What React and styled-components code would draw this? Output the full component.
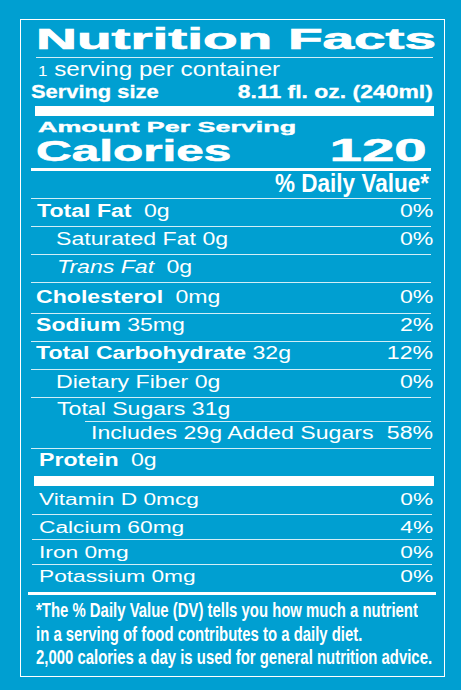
import React from 'react';
import styled, {createGlobalStyle} from 'styled-components';

const BLUE = '#009fd1';

const Global = createGlobalStyle`
    * { box-sizing: border-box; }
    body {
        margin: 0;
        background: ${BLUE};
        color: #fff;
        font-family: "Liberation Sans", Arial, Helvetica, sans-serif;
    }
`;

const Page = styled.div`
    width: 461px;
    height: 690px;
    padding: 19px 0 0 20px;
    background: ${BLUE};
    overflow: hidden;
`;

const Panel = styled.div`
    width: 425px;
    border: 1px solid #fff;
    padding: 0 11px 0 10px;
`;

// horizontally stretched/condensed text, the label uses an extended face
const Stretch = styled.span`
    display: inline-block;
    white-space: nowrap;
    transform: scaleX(${props => props.$sx});
    transform-origin: ${props => props.$right ? 'right' : 'left'} center;
    -webkit-text-stroke: ${props => props.$heavy ? `${props.$heavy}px #fff` : '0'};
`;

const Line = styled.div`
    display: flex;
    justify-content: ${props => props.$end ? 'flex-end' : 'space-between'};
    align-items: flex-start;
    height: ${props => props.$h}px;
    padding: ${props => props.$pt || 0}px ${props => props.$pr || 0}px 0 ${props => props.$pl || 0}px;
    font-size: ${props => props.$size}px;
    line-height: ${props => props.$lh}px;
    font-weight: ${props => props.$bold ? 700 : 400};
    margin-bottom: ${props => props.$mb || 0}px;
`;

const Rule = styled.div`
    height: 1px;
    background: rgba(255, 255, 255, 0.82);
    margin-left: ${props => props.$inset || 0}px;
    margin-right: ${props => props.$right || 0}px;
`;

const Bar = styled.div`
    height: ${props => props.$h}px;
    background: #fff;
    margin: 0 ${props => props.$r || 0}px 0 ${props => props.$l || 0}px;
`;

const Small = styled.span`
    font-size: 14px;
`;

const Big = styled.span`
    font-size: 31px;
`;

const Label = styled.span`
    font-weight: ${props => props.$bold ? 700 : 400};
    font-style: ${props => props.$italic ? 'italic' : 'normal'};
`;

const Amount = styled.span`
    font-weight: 400;
    margin-left: ${props => props.$wide ? 4.5 : 0}px;
`;

const Footnote = styled.div`
    padding: 3px 0 7px 5px;
    font-size: 21px;
    font-weight: 700;
    line-height: 23.5px;
`;

const NoteLine = styled.div`
    white-space: nowrap;
`;

const nutrients = [
    {name: 'Total Fat', bold: true, amt: '0g', wide: true, pct: '0%', h: 27, pt: 1, indent: 6},
    {name: 'Saturated Fat', amt: '0g', pct: '0%', h: 27, pt: 1, indent: 25},
    {name: 'Trans Fat', italic: true, amt: '0g', wide: true, h: 27, pt: 1, indent: 26},
    {name: 'Cholesterol', bold: true, amt: '0mg', wide: true, pct: '0%', h: 30, pt: 3, indent: 5},
    {name: 'Sodium', bold: true, amt: '35mg', pct: '2%', h: 27, pt: 0, indent: 5},
    {name: 'Total Carbohydrate', bold: true, amt: '32g', pct: '12%', h: 27, pt: 0, indent: 5},
    {name: 'Dietary Fiber', amt: '0g', pct: '0%', h: 27, pt: 1, indent: 25},
    {name: 'Total Sugars', amt: '31g', h: 23, pt: 0, indent: 26, inset: 54},
    {name: 'Includes 29g Added Sugars', pct: '58%', h: 26, pt: 0, indent: 60},
    {name: 'Protein', bold: true, amt: '0g', wide: true, h: 27, pt: 0, indent: 8, last: true},
];

const vitamins = [
    {name: 'Vitamin D 0mcg', pct: '0%', h: 28, pt: 2},
    {name: 'Calcium 60mg', pct: '4%', h: 24, pt: 1},
    {name: 'Iron 0mg', pct: '0%', h: 24, pt: 1},
    {name: 'Potassium 0mg', pct: '0%', h: 27, pt: 0},
];

const ROW_SX = 1.32;
const VIT_SX = 1.42;
const NOTE_SX = 0.71;

const NutrientRow = ({n}) =>
    <Line $h={n.h} $pt={n.pt} $pl={n.indent} $size={17.5} $lh={23}>
        <Stretch $sx={ROW_SX}>
            <Label $bold={n.bold} $italic={n.italic}>{n.name}</Label>
            {n.amt && <> <Amount $wide={n.wide}>{n.amt}</Amount></>}
        </Stretch>
        {n.pct && <Stretch $sx={ROW_SX} $right>{n.pct}</Stretch>}
    </Line>;

export default function App() {
    return (
        <Page>
            <Global/>
            <Panel>
                <Line $h={37} $pt={1} $pl={5} $size={29} $lh={36} $bold>
                    <Stretch $sx={1.955} $heavy={0.7}>Nutrition Facts</Stretch>
                </Line>
                <Rule $inset={5}/>
                <Line $h={22} $pl={7} $size={20} $lh={22}>
                    <Stretch $sx={1.21}><Small>1</Small> serving per container</Stretch>
                </Line>
                <Line $h={24} $pl={7} $pr={-2} $size={17.5} $lh={24} $bold $mb={2}>
                    <Stretch $sx={1.25} $heavy={0.3}>Serving size</Stretch>
                    <Stretch $sx={1.31} $heavy={0.3} $right>8.11 fl. oz. (240ml)</Stretch>
                </Line>
                <Bar $h={10} $l={4} $r={-1}/>
                <Line $h={22} $pl={7} $size={15} $lh={22} $bold>
                    <Stretch $sx={1.79} $heavy={0.4}>Amount Per Serving</Stretch>
                </Line>
                <Line $h={26} $pl={5} $pr={6} $size={30} $lh={26} $bold $mb={4}>
                    <Stretch $sx={1.65} $heavy={0.6}>Calories</Stretch>
                    <Stretch $sx={1.88} $heavy={0.6} $right><Big>120</Big></Stretch>
                </Line>
                <Bar $h={3} $r={2}/>
                <Line $h={27} $pr={4} $size={25} $lh={25} $bold $end>
                    <Stretch $sx={0.9} $right>% Daily Value*</Stretch>
                </Line>
                <Rule $right={2}/>
                {nutrients.map(n =>
                    <React.Fragment key={n.name}>
                        <NutrientRow n={n}/>
                        {!n.last && <Rule $inset={n.inset} $right={2}/>}
                    </React.Fragment>
                )}
                <Bar $h={10} $l={3} $r={-1}/>
                {vitamins.map((v, i) =>
                    <React.Fragment key={v.name}>
                        <Line $h={v.h} $pt={v.pt} $pl={8} $size={16} $lh={23}>
                            <Stretch $sx={VIT_SX}>{v.name}</Stretch>
                            <Stretch $sx={VIT_SX} $right>{v.pct}</Stretch>
                        </Line>
                        {i < vitamins.length - 1 && <Rule $inset={1} $right={1}/>}
                    </React.Fragment>
                )}
                <Bar $h={3} $l={-3} $r={-3}/>
                <Footnote>
                    <NoteLine><Stretch $sx={NOTE_SX}>*The % Daily Value (DV) tells you how much a nutrient</Stretch></NoteLine>
                    <NoteLine><Stretch $sx={NOTE_SX}>in a serving of food contributes to a daily diet.</Stretch></NoteLine>
                    <NoteLine><Stretch $sx={NOTE_SX}>2,000 calories a day is used for general nutrition advice.</Stretch></NoteLine>
                </Footnote>
            </Panel>
        </Page>
    );
}
